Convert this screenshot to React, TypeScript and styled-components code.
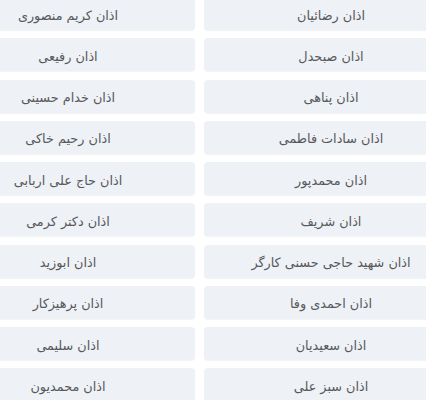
import React from "react";
import styled, { createGlobalStyle } from "styled-components";

const GlobalStyle = createGlobalStyle`
  html, body {
    margin: 0;
    padding: 0;
    background: #ffffff;
    overflow: hidden;
  }
  body {
    font-family: "DejaVu Sans", "Noto Sans", sans-serif;
  }
`;

const Viewport = styled.div`
  width: 426px;
  height: 400px;
  overflow: hidden;
`;

const AzanGrid = styled.ul`
  direction: rtl;
  list-style: none;
  margin: -3px 0 0 -59px;
  padding: 0;
  width: 517px;
  display: grid;
  grid-template-columns: 254px 254px;
  grid-auto-rows: 33px;
  column-gap: 9px;
  row-gap: 8.25px;
`;

const AzanItem = styled.li`
  display: flex;
  align-items: center;
  justify-content: center;
  background: #eef1f5;
  border-radius: 4px;
  box-shadow: 0 1px 1px rgba(60, 80, 110, 0.07);
  color: #56585c;
  font-size: 12.8px;
  padding-top: 3px;
  box-sizing: border-box;
  white-space: nowrap;
`;

const reciters: string[] = [
  "اذان رضائیان",
  "اذان کریم منصوری",
  "اذان صبحدل",
  "اذان رفیعی",
  "اذان پناهی",
  "اذان خدام حسینی",
  "اذان سادات فاطمی",
  "اذان رحیم خاکی",
  "اذان محمدپور",
  "اذان حاج علی اربابی",
  "اذان شریف",
  "اذان دکتر کرمی",
  "اذان شهید حاجی حسنی کارگر",
  "اذان ابوزید",
  "اذان احمدی وفا",
  "اذان پرهیزکار",
  "اذان سعیدیان",
  "اذان سلیمی",
  "اذان سبز علی",
  "اذان محمدیون",
];

export default function App() {
  return (
    <>
      <GlobalStyle />
      <Viewport>
        <AzanGrid>
          {reciters.map((name) => (
            <AzanItem key={name}>{name}</AzanItem>
          ))}
        </AzanGrid>
      </Viewport>
    </>
  );
}
